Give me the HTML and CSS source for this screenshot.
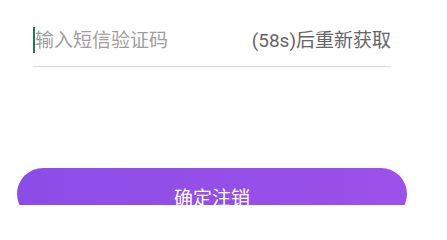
FILE: index.html
```html
<!DOCTYPE html>
<html lang="zh-CN">
<head>
<meta charset="utf-8">
<title>确定注销</title>
<link rel="stylesheet" href="styles.css">
</head>
<body>
<div class="page">
  <div class="field">
    <span class="caret"></span>
    <span class="placeholder">输入短信验证码</span>
    <span class="resend">(58s)后重新获取</span>
  </div>
  <button class="submit" type="button">确定注销</button>
</div>
</body>
</html>
```
FILE: styles.css
```css
html, body {
  margin: 0;
  padding: 0;
  background: #ffffff;
}
body {
  font-family: Roboto, "Noto Sans CJK SC", sans-serif;
  width: 447px;
  height: 205px;
  overflow: hidden;
}
.page {
  display: flex;
  flex-direction: column;
  width: 390px;
  margin-left: 17px;
}
.field {
  display: flex;
  align-items: flex-start;
  margin: 0 16px;
  padding-top: 27px;
  padding-bottom: 13px;
  border-bottom: 1px solid #d9d9d9;
  height: 26px;
}
.caret {
  width: 2px;
  height: 26px;
  background: #1d7a58;
  flex: none;
}
.placeholder {
  font-size: 19px;
  line-height: 28px;
  color: #9e9e9e;
  flex: 1;
}
.resend {
  font-size: 19px;
  line-height: 28px;
  color: #666666;
  flex: none;
}
.submit {
  margin-top: 101px;
  height: 52px;
  border: none;
  border-radius: 26px;
  background: linear-gradient(90deg, #8b4de6, #9c51ea);
  color: #ffffff;
  font-family: Roboto, "Noto Sans CJK SC", sans-serif;
  font-size: 19px;
  padding: 0;
  padding-top: 4px;
}
```
